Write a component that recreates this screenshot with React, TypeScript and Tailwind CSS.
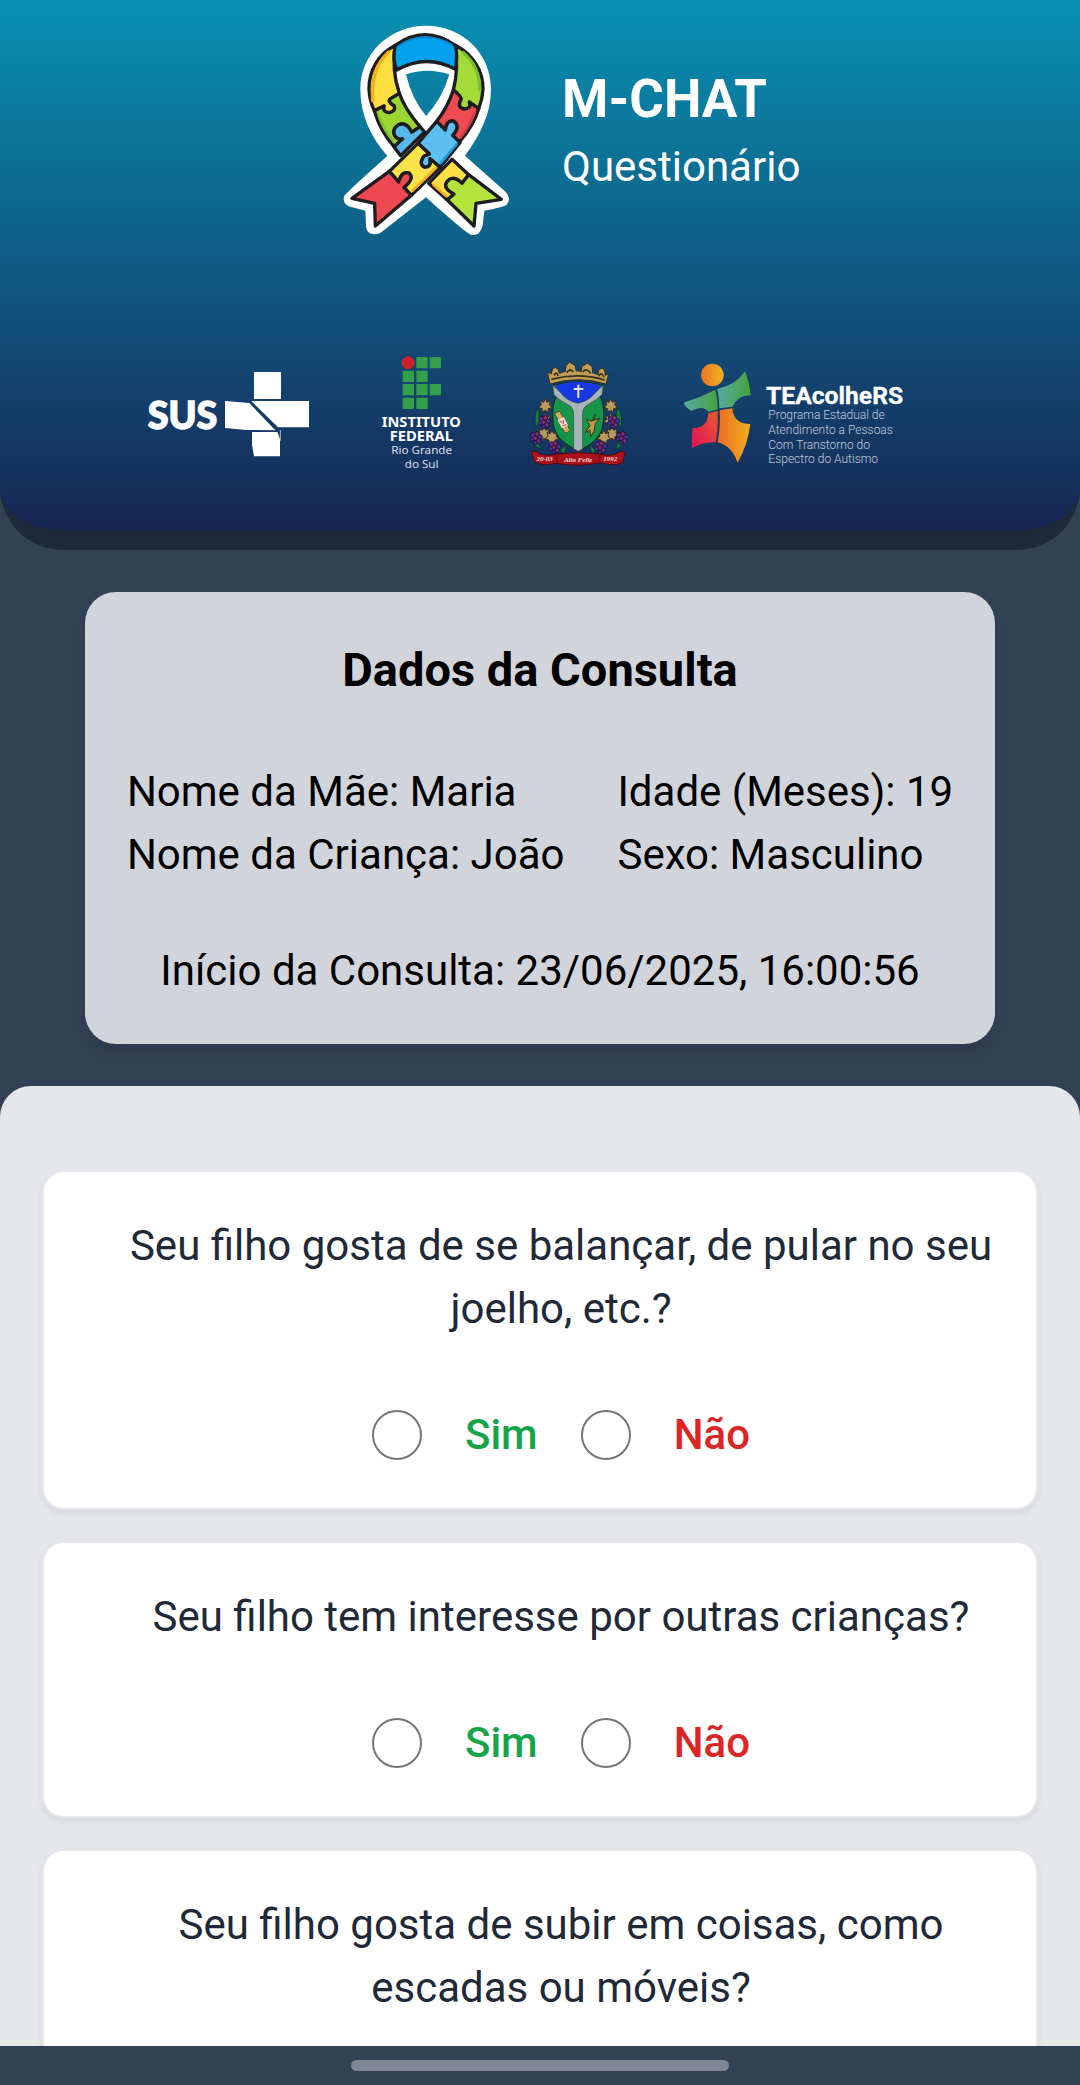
import { useState } from "react";

const INK = "#1d1d1f";

function RibbonLogo() {
  return (
    <svg viewBox="0 0 600 720" className="h-[240px] w-[200px] shrink-0" role="img" aria-label="Laço do autismo">
      <path
        fill="#fff"
        fillRule="evenodd"
        d="M288 47C398 47 483 130 483 238C483 312 450 376 405 437L524 543Q546 565 530 584Q524 590 463 602L458 645Q452 678 424 675Q410 672 288 562L152 668Q135 677 120 670Q108 664 108 645L106 602L56 589Q36 578 43 558Q46 550 172 438C120 380 91 312 91 238C91 130 180 47 288 47ZM228 193Q244 264 288 318Q338 264 358 193Q292 171 228 193Z"
      />
      <g stroke={INK} strokeWidth="10" strokeLinejoin="round" strokeLinecap="round">
        <path fill="#fdde40" d="M196 106C146 132 116 180 117 238C118 264 124 284 133 302L162 288Q156 306 178 308Q198 304 193 288Q170 274 182 266L208 250Q184 180 196 106Z" />
        <path fill="#9bd531" d="M133 302L162 288Q156 306 178 308Q198 304 193 288Q170 274 182 266L208 250C222 292 246 322 270 350L245 367Q230 334 204 345Q182 362 198 382Q208 390 218 386L192 410C162 376 144 342 133 302Z" />
        <path fill="#55b7ea" d="M270 350L245 367Q230 334 204 345Q182 362 198 382Q208 390 218 386L192 410L212 437L284 366Z" />
        <path fill="#a5db37" d="M376 106C430 134 460 184 459 238C458 260 454 276 446 296L418 276Q426 296 402 297Q380 292 392 270Q398 262 370 240Q386 180 376 106Z" />
        <path fill="#ef4a53" d="M446 296L418 276Q426 296 402 297Q380 292 392 270Q398 262 370 240C358 276 344 304 320 334L346 360Q350 328 372 334Q392 350 368 376L388 396C418 362 436 330 446 296Z" />
        <path fill="#03a2ef" d="M196 106Q284 42 376 106Q384 134 376 178Q290 130 200 180Q186 146 196 106Z" />
        <path fill="#fddf45" d="M366 448L416 494L396 520Q370 494 352 514Q336 534 372 552L352 570L296 520Z" />
        <path fill="#b2e43b" d="M416 494L514 568L438 580L432 648L352 570L372 552Q336 534 352 514Q370 494 396 520Z" />
        <path fill="#5cbff0" d="M320 334L346 360Q350 328 372 334Q392 350 368 376L390 398L330 472L300 446Q306 472 284 472Q264 462 282 438L298 432L264 400Z" />
        <path fill="#fde24a" d="M264 400L298 432L282 438Q264 462 284 472Q306 472 300 446L330 472L244 556L222 532Q254 506 238 490Q216 480 206 516L178 484Z" />
        <path fill="#ee4952" d="M178 484L206 516Q216 480 238 490Q254 506 222 532L244 556L136 648L134 580L66 565Z" />
      </g>
      <g fill="none" strokeWidth="10" strokeLinecap="round">
        <path stroke="#f9ad19" d="M176 126Q120 176 128 272" />
        <path stroke="#7fbe2b" d="M400 128Q450 170 449 240" />
        <path stroke="#0a86cf" strokeWidth="5" d="M208 106Q284 58 366 104" />
        <path stroke="#82c22c" strokeWidth="8" d="M146 316Q160 358 190 394" />
        <path stroke="#d23b48" strokeWidth="8" d="M434 308Q420 346 392 382" />
        <path stroke="#2196d8" strokeWidth="8" d="M380 402L332 460" />
        <path stroke="#f5ae22" strokeWidth="8" d="M318 474L248 542M310 524L348 558" />
      </g>
    </svg>
  );
}

function SusLogo() {
  return (
    <svg viewBox="42 0 519 375" className="h-[125px] w-[173px] shrink-0" role="img" aria-label="SUS">
      <text x="53" y="237" fill="#fff" stroke="#fff" strokeWidth="4" fontFamily="Lato, sans-serif" fontWeight="900" fontSize="113">
        SUS
      </text>
      <g fill="#fff">
        <path d="M372 66H453V147H372Z" />
        <path d="M364 153H537V232H444Z" />
        <path d="M285 153L358 159L436 241L348 240L285 234Z" />
        <path d="M366 246H442L450 268V319H372L366 284Z" />
      </g>
      <path d="M451 240V272" stroke="#fff" strokeWidth="2" />
    </svg>
  );
}

const IF_BLOCKS = [
  [169, 51], [209, 51],
  [128, 92], [169, 92],
  [128, 132], [169, 132], [209, 132],
  [128, 173], [169, 173],
];

function InstitutoLogo() {
  return (
    <svg viewBox="39 30 291 375" className="h-[125px] w-[97px] shrink-0" role="img" aria-label="Instituto Federal Rio Grande do Sul">
      <circle cx="144" cy="68" r="19" fill="#cf2127" />
      {IF_BLOCKS.map(([x, y]) => (
        <rect key={`${x}-${y}`} x={x} y={y} width="34" height="34" rx="2" fill="#32a04a" />
      ))}
      <g fill="#fff" textAnchor="middle" fontFamily="'Noto Sans', sans-serif">
        <text x="184" y="262" fontSize="44" fontWeight="700">INSTITUTO</text>
        <text x="184" y="302" fontSize="44" fontWeight="700">FEDERAL</text>
        <text x="185" y="343" fontSize="35" fill="#d5deea">Rio Grande</text>
        <text x="185" y="384" fontSize="35" fill="#d5deea">do Sul</text>
      </g>
    </svg>
  );
}

const CREST_LEAVES = [
  [76, 168], [76, 212], [72, 252], [96, 262], [272, 168], [272, 212], [276, 252], [252, 262],
];
const CREST_GRAPES = [
  [73, 216], [48, 264], [104, 292], [280, 216], [306, 264], [242, 292],
];

function CrestLogo() {
  return (
    <svg viewBox="18 0 306 375" className="h-[125px] w-[102px] shrink-0" role="img" aria-label="Brasão de Alto Feliz">
      <g fill="#137c3e" stroke="#0b2c22" strokeWidth="2">
        <path d="M54 172Q40 196 48 232Q66 214 54 172ZM40 240Q32 256 44 286L64 300ZM120 300L140 284L132 312Z" />
        <path d="M292 172Q310 196 302 232Q282 214 292 172ZM310 240Q320 256 306 286L286 300ZM228 300L208 284L216 312Z" />
      </g>
      {CREST_LEAVES.map(([x, y]) => (
        <path
          key={`${x}-${y}`}
          transform={`translate(${x} ${y})`}
          d="M0 -22L5 -11L15 -15L12 -4L20 5L9 8L8 19L0 13L-9 19L-9 8L-20 5L-12 -4L-15 -15L-5 -11Z"
          fill="#b99c5c"
          stroke="#3c3020"
          strokeWidth="3"
        />
      ))}
      {CREST_GRAPES.map(([x, y]) => (
        <g key={`${x}-${y}`} transform={`translate(${x} ${y})`} stroke="#1e1740" strokeWidth="3">
          <circle cx="-9" cy="-9" r="7" fill="#6a3190" />
          <circle cx="3" cy="-12" r="7" fill="#8c2c62" />
          <circle cx="12" cy="-3" r="7" fill="#4b30a0" />
          <circle cx="-3" cy="1" r="7" fill="#a02d55" />
          <circle cx="-12" cy="4" r="6" fill="#4030a0" />
          <circle cx="7" cy="9" r="7" fill="#7a3080" />
          <circle cx="-2" cy="14" r="6" fill="#4f2a88" />
        </g>
      ))}
      <path d="M98 106Q174 86 250 106L242 142Q256 170 249 222C244 266 210 284 175 304C140 284 106 266 100 222Q94 170 108 142Z" fill="#169447" stroke="#10251d" strokeWidth="3" />
      <path d="M104 108Q174 84 244 108L226 128Q208 152 174 160Q138 152 122 128Z" fill="#1738e2" />
      <path d="M98 106L122 128Q138 152 174 160Q208 152 226 128L250 106L246 134Q228 152 204 164Q188 172 188 192V296L175 304L161 296V192Q160 172 144 164Q118 152 102 134Z" fill="#a7b4ba" stroke="#30423f" strokeWidth="2" />
      <path d="M175 104V144M161 117H190" stroke="#dfe7f6" strokeWidth="6" />
      <g transform="rotate(-28 128 216)">
        <rect x="118" y="182" width="18" height="68" rx="6" fill="#c9aa62" stroke="#2a2a18" strokeWidth="2" />
        <rect x="117" y="204" width="21" height="28" fill="#f5d9d4" />
        <path d="M121 210L127 216M133 212L127 222M122 226L134 228" stroke="#d33c4a" strokeWidth="3" />
      </g>
      <path d="M226 192L220 212L240 204L226 220L222 244L212 260L210 240L196 248L210 226L200 208L216 214Z" fill="#bd9b45" stroke="#3a3417" strokeWidth="3" />
      <path d="M90 102L82 66L94 72L97 56L106 52L115 58L118 70L136 64L138 46L146 40L150 35L156 42L166 46L168 62L184 64L186 48L196 44L201 38L208 44L216 48L218 68L234 74L236 60L246 54L254 60L256 76L266 72L258 102Q174 76 90 102Z" fill="#bd9d58" stroke="#372c18" strokeWidth="3" />
      <path d="M94 88Q174 66 254 90M102 76Q110 62 114 78M140 68Q150 52 160 66M188 66Q200 52 212 70M236 78Q246 64 252 82" fill="none" stroke="#3a2e18" strokeWidth="5" />
      <path d="M34 304L48 304Q66 322 112 312Q174 304 238 312Q280 322 300 304L316 306L308 338Q286 350 242 338Q174 352 108 340Q58 350 42 332Z" fill="#ac1119" stroke="#4b0b12" strokeWidth="3" />
      <path d="M110 312V342M240 312V342" stroke="#65101a" strokeWidth="4" />
      <g fill="#f4dede" fontFamily="'Liberation Serif', serif" fontWeight="700" fontStyle="italic" fontSize="21" textAnchor="middle">
        <text x="74" y="333">20-03</text>
        <text x="174" y="335">Alto Feliz</text>
        <text x="271" y="333">1992</text>
      </g>
    </svg>
  );
}

function TeacolheLogo() {
  return (
    <svg viewBox="42 0 756 375" className="h-[125px] w-[252px] shrink-0" role="img" aria-label="TEAcolheRS">
      <defs>
        <linearGradient id="tea-sun" x1="0" x2="1">
          <stop offset="0" stopColor="#ea7423" />
          <stop offset="1" stopColor="#f3b31c" />
        </linearGradient>
        <linearGradient id="tea-green" x1="0" x2="1">
          <stop offset="0" stopColor="#5aa9a4" />
          <stop offset="1" stopColor="#45a23c" />
        </linearGradient>
        <linearGradient id="tea-red" x1="0" y1="1" x2="1" y2="0">
          <stop offset="0" stopColor="#e0115a" />
          <stop offset="1" stopColor="#ea5a2b" />
        </linearGradient>
        <linearGradient id="tea-orange" x1="0" x2="1">
          <stop offset="0" stopColor="#ea6a26" />
          <stop offset="1" stopColor="#f3b01c" />
        </linearGradient>
      </defs>
      <circle cx="127" cy="75" r="34" fill="url(#tea-sun)" />
      <path fill="url(#tea-green)" d="M40 158Q92 142 136 119Q144 148 143 178L115 185Q98 164 64 183Q46 172 40 158Z" />
      <path fill="url(#tea-green)" d="M142 117Q196 106 225 64Q238 96 242 136Q204 134 188 170L148 175Q148 148 142 117Z" />
      <path fill="url(#tea-red)" d="M115 189L143 183Q145 230 138 277Q100 274 66 295Q64 260 68 234Q112 236 115 189Z" />
      <path fill="url(#tea-orange)" d="M149 181L187 175Q190 222 241 222Q234 282 203 338Q184 286 143 277Q152 230 149 181Z" />
      <g fontFamily="Roboto, sans-serif">
        <text x="288" y="162" fill="#fff" stroke="#fff" strokeWidth="1" fontWeight="700" fontSize="74">TEAcolheRS</text>
        <g fill="#c3cddd" fontWeight="300" fontSize="36">
          <text x="295" y="207">Programa Estadual de</text>
          <text x="295" y="252">Atendimento a Pessoas</text>
          <text x="295" y="298">Com Transtorno do</text>
          <text x="295" y="339">Espectro do Autismo</text>
        </g>
      </g>
    </svg>
  );
}

function Header() {
  return (
    <header className="flex shrink-0 flex-col gap-[100px] rounded-b-[63px] border-b-[20px] border-[#1e293b] bg-linear-to-b/srgb from-[#0891b2] to-[#172554] pt-[10px] pb-[55px] text-white">
      <div className="flex items-center">
        <div className="flex w-1/2 justify-end pr-[10px]">
          <RibbonLogo />
        </div>
        <div className="w-1/2 pl-[22px]">
          <h1 className="text-[53px] leading-[72px] font-bold">M-CHAT</h1>
          <p>Questionário</p>
        </div>
      </div>
      <div className="flex justify-center gap-14">
        <SusLogo />
        <InstitutoLogo />
        <CrestLogo />
        <TeacolheLogo />
      </div>
    </header>
  );
}

function ConsultCard() {
  return (
    <section className="mx-[85px] my-[42px] rounded-[31px] bg-[#d1d5db] px-[42px] pt-[41px] pb-[42px] text-black shadow-[0_10px_15px_-3px_rgba(0,0,0,0.12)]">
      <h2 className="text-center text-[47px] leading-[74px] font-bold">Dados da Consulta</h2>
      <div className="mt-[53px] flex justify-center gap-[53px] whitespace-nowrap">
        <div>
          <p>Nome da Mãe: Maria</p>
          <p>Nome da Criança: João</p>
        </div>
        <div>
          <p>Idade (Meses): 19</p>
          <p>Sexo: Masculino</p>
        </div>
      </div>
      <p className="mt-[53px] text-center">Início da Consulta: 23/06/2025, 16:00:56</p>
    </section>
  );
}

const RADIO =
  "size-[50px] shrink-0 appearance-none rounded-full border-2 border-[#767676] bg-white checked:border-[14px] checked:border-[#2563eb]";

function Question({ id, text }: { id: string; text: string }) {
  const [answer, setAnswer] = useState("");
  return (
    <li className="rounded-[21px] border-2 border-[#e5e7eb] bg-white bg-clip-padding py-[42px] pr-[40px] pl-[82px] shadow-[0_3px_6px_rgba(0,0,0,0.08)]">
      <p id={`${id}-text`} className="text-center text-[#1f2937]">
        {text}
      </p>
      <div
        role="radiogroup"
        aria-labelledby={`${id}-text`}
        className="mt-[63px] flex items-center justify-center gap-[43px] font-medium"
      >
        <input id={`${id}-sim`} className={RADIO} type="radio" name={id} checked={answer === "sim"} onChange={() => setAnswer("sim")} />
        <label htmlFor={`${id}-sim`} className="text-[#16a34a]">Sim</label>
        <input id={`${id}-nao`} className={RADIO} type="radio" name={id} checked={answer === "nao"} onChange={() => setAnswer("nao")} />
        <label htmlFor={`${id}-nao`} className="text-[#dc2626]">Não</label>
      </div>
    </li>
  );
}

const QUESTIONS = [
  "Seu filho gosta de se balançar, de pular no seu joelho, etc.?",
  "Seu filho tem interesse por outras crianças?",
  "Seu filho gosta de subir em coisas, como escadas ou móveis?",
];

export default function App() {
  return (
    <div className="flex h-screen flex-col bg-[#334155] font-[Roboto,sans-serif] text-[42px] leading-[63px]">
      <main className="min-h-0 flex-1 overflow-y-auto [scrollbar-width:none]">
        <Header />
        <ConsultCard />
        <ol className="flex flex-col gap-[31px] rounded-t-[31px] bg-[#e5e7eb] px-[42px] pt-[84px] pb-[84px]">
          {QUESTIONS.map((text, i) => (
            <Question key={text} id={`q${i + 1}`} text={text} />
          ))}
        </ol>
      </main>
      <footer className="flex h-[39px] shrink-0 items-center justify-center">
        <div className="h-[11px] w-[35%] rounded-full bg-[#7e8693]" />
      </footer>
    </div>
  );
}
